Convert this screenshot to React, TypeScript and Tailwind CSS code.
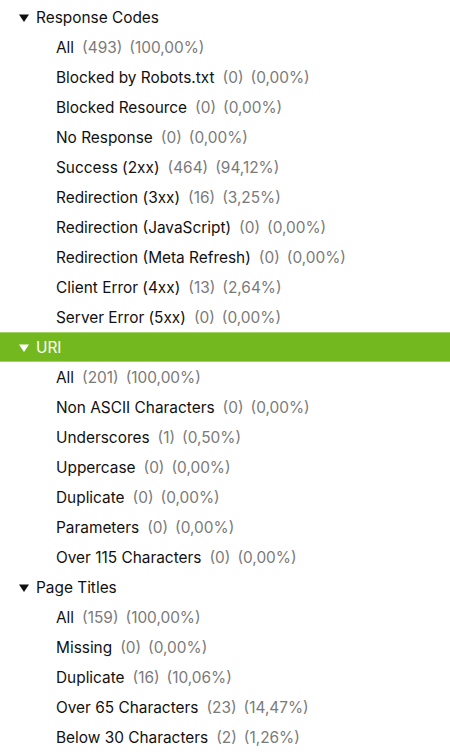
import React from 'react'

type Item = { label: string; count: number; pct: string }
type Group = { title: string; selected?: boolean; items: Item[] }

const groups: Group[] = [
  {
    title: 'Response Codes',
    items: [
      { label: 'All', count: 493, pct: '100,00%' },
      { label: 'Blocked by Robots.txt', count: 0, pct: '0,00%' },
      { label: 'Blocked Resource', count: 0, pct: '0,00%' },
      { label: 'No Response', count: 0, pct: '0,00%' },
      { label: 'Success (2xx)', count: 464, pct: '94,12%' },
      { label: 'Redirection (3xx)', count: 16, pct: '3,25%' },
      { label: 'Redirection (JavaScript)', count: 0, pct: '0,00%' },
      { label: 'Redirection (Meta Refresh)', count: 0, pct: '0,00%' },
      { label: 'Client Error (4xx)', count: 13, pct: '2,64%' },
      { label: 'Server Error (5xx)', count: 0, pct: '0,00%' },
    ],
  },
  {
    title: 'URI',
    selected: true,
    items: [
      { label: 'All', count: 201, pct: '100,00%' },
      { label: 'Non ASCII Characters', count: 0, pct: '0,00%' },
      { label: 'Underscores', count: 1, pct: '0,50%' },
      { label: 'Uppercase', count: 0, pct: '0,00%' },
      { label: 'Duplicate', count: 0, pct: '0,00%' },
      { label: 'Parameters', count: 0, pct: '0,00%' },
      { label: 'Over 115 Characters', count: 0, pct: '0,00%' },
    ],
  },
  {
    title: 'Page Titles',
    items: [
      { label: 'All', count: 159, pct: '100,00%' },
      { label: 'Missing', count: 0, pct: '0,00%' },
      { label: 'Duplicate', count: 16, pct: '10,06%' },
      { label: 'Over 65 Characters', count: 23, pct: '14,47%' },
      { label: 'Below 30 Characters', count: 2, pct: '1,26%' },
    ],
  },
]

function Caret({ white }: { white?: boolean }) {
  return (
    <svg width="10" height="8" viewBox="0 0 10 8" className="mr-[7px]">
      <path d="M0 0.5 L10 0.5 L5 8 Z" fill={white ? '#ffffff' : '#111111'} />
    </svg>
  )
}

export default function App() {
  return (
    <div
      className="h-[756px] w-[450px] overflow-hidden bg-white pt-[2px] text-[15.4px] text-[#111]"
      style={{ fontFamily: 'Inter, "Liberation Sans", Arial, sans-serif' }}
    >
      {groups.map((g) => (
        <div key={g.title}>
          {g.selected ? (
            <div className="flex h-[30px] items-center border-y border-[#a3d266] bg-[#74b81f] pl-[19px] pt-[1px] text-white">
              <Caret white />
              <span>{g.title}</span>
            </div>
          ) : (
            <div className="flex h-[30px] items-center pl-[19px] pt-[1px]">
              <Caret />
              <span>{g.title}</span>
            </div>
          )}
          {g.items.map((it) => (
            <div key={it.label} className="flex h-[30px] items-center whitespace-nowrap pl-[56px] pt-[1px]">
              <span>{it.label}</span>
              <span className="ml-[8px] text-[#7a7a7a]">({it.count})</span>
              <span className="ml-[7px] text-[#7a7a7a]">({it.pct})</span>
            </div>
          ))}
        </div>
      ))}
    </div>
  )
}
